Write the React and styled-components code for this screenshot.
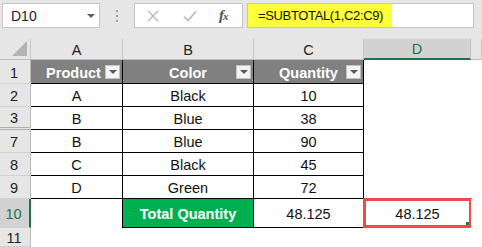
import React from 'react';
import styled, { createGlobalStyle } from 'styled-components';

const Global = createGlobalStyle`
  html, body { margin: 0; padding: 0; background: #fff; }
  body {
    width: 482px; height: 247px; overflow: hidden;
    font-family: "Liberation Sans", Arial, sans-serif;
  }
`;

const Toolbar = styled.div`
  height: 31px;
  box-sizing: border-box;
  padding-top: 3px;
  background: #e6e6e6;
  display: flex;
  align-items: flex-start;
`;

const NameBox = styled.div`
  margin-left: 2px;
  width: 98px;
  height: 25px;
  box-sizing: border-box;
  background: #fff;
  border: 1px solid #c6c6c6;
  display: flex;
  align-items: center;
  justify-content: space-between;
  padding: 0 4px 0 8px;
  font-size: 14px;
  color: #222;
`;

const Caret = styled.span`
  width: 0; height: 0;
  border-left: 4px solid transparent;
  border-right: 4px solid transparent;
  border-top: 4px solid #606060;
`;

const Grip = styled.div`
  width: 34px;
  height: 25px;
  display: flex;
  flex-direction: column;
  align-items: center;
  justify-content: center;
  gap: 3px;
`;

const Dot = styled.span`
  width: 2px; height: 2px;
  background: #a0a0a0;
`;

const FuncBox = styled.div`
  width: 109px;
  height: 25px;
  box-sizing: border-box;
  background: #fff;
  border: 1px solid #c6c6c6;
  display: flex;
  align-items: center;
  padding-left: 12px;
  gap: 24px;
`;

const Fx = styled.span`
  font-family: "Liberation Serif", "Times New Roman", serif;
  font-style: italic;
  font-weight: 700;
  font-size: 15px;
  color: #505050;
  margin-left: -2px;
  letter-spacing: -1px;
  & > small { font-size: 11px; }
`;

const FormulaBox = styled.div`
  margin-left: 4px;
  width: 227px;
  height: 25px;
  box-sizing: border-box;
  background: #fff;
  border: 1px solid #c6c6c6;
  display: flex;
  align-items: stretch;
`;

const Highlight = styled.div`
  background: #ffff3c;
  width: 144px;
  display: flex;
  align-items: center;
  padding-left: 10px;
  box-sizing: border-box;
  font-size: 13px;
  letter-spacing: -0.35px;
  color: #111;
`;

const Strip = styled.div`
  height: 8px;
  background: #e6e6e6;
`;

const Sheet = styled.div`
  display: grid;
  grid-template-columns: 31px 92px 131px 110px 107px 11px;
  grid-template-rows: 21px 24px repeat(5, 23px) 29px 19px;
  font-size: 14.5px;
`;

const Corner = styled.div`
  background: #e6e6e6;
  border-right: 1px solid #c8c8c8;
  border-bottom: 1px solid #bdbdbd;
  box-sizing: border-box;
  display: flex;
  align-items: flex-end;
  justify-content: flex-end;
  padding: 0 3px 3px 0;
`;

const ColHead = styled.div`
  background: ${p => (p.$sel ? '#d2d2d2' : '#e6e6e6')};
  color: ${p => (p.$sel ? '#217346' : '#222')};
  border-right: 1px solid ${p => (p.$sel ? '#c0c0c0' : '#c8c8c8')};
  border-bottom: ${p => (p.$sel ? '2px solid #217346' : '1px solid #bdbdbd')};
  box-sizing: border-box;
  display: flex;
  align-items: center;
  justify-content: center;
  padding-top: 1px;
`;

const RowHead = styled.div`
  background: ${p => (p.$sel ? '#d2d2d2' : '#e6e6e6')};
  color: ${p => (p.$sel ? '#217346' : '#222')};
  border-right: ${p => (p.$sel ? '2px solid #217346' : '1px solid #bdbdbd')};
  border-bottom: ${p => (p.$double ? '3px double #b0b0b0' : '1px solid #d0d0d0')};
  box-sizing: border-box;
  display: flex;
  align-items: center;
  justify-content: center;
  padding: 2px 2px 0 0;
`;

const Cell = styled.div`
  position: relative;
  box-sizing: border-box;
  background: ${p => p.$bg || '#fff'};
  color: ${p => p.$color || '#111'};
  font-weight: ${p => (p.$bold ? 700 : 400)};
  border-right: ${p => (p.$r ? '1px solid #000' : 'none')};
  border-bottom: ${p => (p.$b ? '1px solid #000' : 'none')};
  display: flex;
  align-items: center;
  justify-content: center;
  padding-top: 2px;
  white-space: nowrap;
`;

const HeadCell = styled(Cell)`
  padding-right: ${p => p.$pr || 0}px;
`;

const FilterBtn = styled.span`
  position: absolute;
  right: 2px;
  top: 50%;
  margin-top: -7px;
  width: 15px;
  height: 14px;
  box-sizing: border-box;
  background: #f4f4f4;
  border: 1px solid #c4c4c4;
  display: flex;
  align-items: center;
  justify-content: center;
  &::after {
    content: '';
    border-left: 4px solid transparent;
    border-right: 4px solid transparent;
    border-top: 4px solid #595959;
    margin-top: 1px;
  }
`;

const Selected = styled(Cell)`
  border: 3px solid #f24848;
  margin: -1px -1px 0 -1px;
  padding-top: 1px;
`;

const Handle = styled.span`
  position: absolute;
  right: 0;
  bottom: 0;
  width: 3px;
  height: 3px;
  background: #217346;
`;

const rows = [
  { n: '2', a: 'A', b: 'Black', c: '10' },
  { n: '3', a: 'B', b: 'Blue', c: '38', dbl: true },
  { n: '7', a: 'B', b: 'Blue', c: '90' },
  { n: '8', a: 'C', b: 'Black', c: '45' },
  { n: '9', a: 'D', b: 'Green', c: '72' },
];

export default function App() {
  return (
    <>
      <Global />
      <Toolbar>
        <NameBox>
          <span>D10</span>
          <Caret />
        </NameBox>
        <Grip><Dot /><Dot /><Dot /></Grip>
        <FuncBox>
          <svg width="12" height="12" viewBox="0 0 12 12">
            <path d="M1 1 L11 11 M11 1 L1 11" stroke="#b8b8b8" strokeWidth="1.4" fill="none" />
          </svg>
          <svg width="14" height="12" viewBox="0 0 14 12">
            <path d="M1 6.5 L5 10.5 L13 1.5" stroke="#b8b8b8" strokeWidth="1.6" fill="none" />
          </svg>
          <Fx>f<small>x</small></Fx>
        </FuncBox>
        <FormulaBox>
          <Highlight>=SUBTOTAL(1,C2:C9)</Highlight>
        </FormulaBox>
      </Toolbar>
      <Strip />
      <Sheet>
        <Corner>
          <svg width="15" height="15" viewBox="0 0 15 15">
            <path d="M15 0 L15 15 L0 15 Z" fill="#b4b4b4" />
          </svg>
        </Corner>
        <ColHead>A</ColHead>
        <ColHead>B</ColHead>
        <ColHead>C</ColHead>
        <ColHead $sel>D</ColHead>
        <ColHead />

        <RowHead>1</RowHead>
        <HeadCell $bg="#808080" $color="#fff" $bold $r $b $pr={6}>Product<FilterBtn /></HeadCell>
        <HeadCell $bg="#808080" $color="#fff" $bold $r $b>Color<FilterBtn /></HeadCell>
        <HeadCell $bg="#808080" $color="#fff" $bold $r $b>Quantity<FilterBtn /></HeadCell>
        <Cell />
        <Cell />

        {rows.map(r => (
          <React.Fragment key={r.n}>
            <RowHead $double={r.dbl}>{r.n}</RowHead>
            <Cell $r $b>{r.a}</Cell>
            <Cell $r $b>{r.b}</Cell>
            <Cell $r $b>{r.c}</Cell>
            <Cell />
            <Cell />
          </React.Fragment>
        ))}

        <RowHead $sel>10</RowHead>
        <Cell $r />
        <Cell $bg="#00b050" $color="#fff" $bold $r $b>Total Quantity</Cell>
        <Cell $r $b>48.125</Cell>
        <Selected>48.125<Handle /></Selected>
        <Cell />

        <RowHead>11</RowHead>
        <Cell />
        <Cell />
        <Cell />
        <Cell />
        <Cell />
      </Sheet>
    </>
  );
}
